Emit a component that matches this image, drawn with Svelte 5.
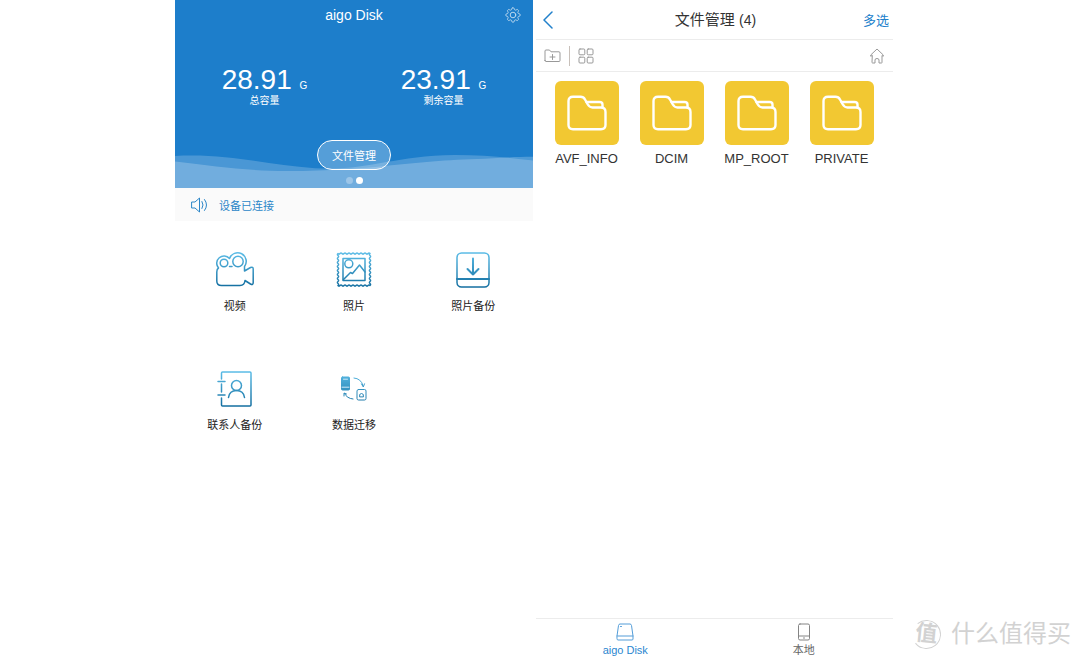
<script lang="ts">
	interface Stat {
		value: string;
		label: string;
	}

	const stats: Stat[] = [
		{ value: '28.91', label: '总容量' },
		{ value: '23.91', label: '剩余容量' }
	];

	const actions = [
		{ icon: 'video', label: '视频' },
		{ icon: 'photo', label: '照片' },
		{ icon: 'backup', label: '照片备份' },
		{ icon: 'contacts', label: '联系人备份' },
		{ icon: 'transfer', label: '数据迁移' }
	];

	const folders = ['AVF_INFO', 'DCIM', 'MP_ROOT', 'PRIVATE'];

	// stamp outline: a square with waved edges
	const stamp = (() => {
		const sides = [
			[1, 0],
			[0, 1],
			[-1, 0],
			[0, -1]
		];
		let d = 'M3 2.5';
		for (const [x, y] of sides) {
			for (let i = 0; i < 8; i++) {
				d += `q${x - y * 1.2} ${y + x * 1.2} ${x * 2} ${y * 2}`;
				d += `q${x + y * 1.2} ${y - x * 1.2} ${x * 2} ${y * 2}`;
			}
		}
		return d + 'z';
	})();

	// eight-lobed cog, radius swings between the notch and the tooth
	const cog = (() => {
		const points: string[] = [];
		for (let i = 0; i < 96; i++) {
			const a = (i / 96) * Math.PI * 2;
			const r = 6.3 + 0.9 * Math.tanh(2 * Math.cos(8 * a));
			points.push(`${(8 + r * Math.sin(a)).toFixed(2)} ${(8 - r * Math.cos(a)).toFixed(2)}`);
		}
		return 'M' + points.join('L') + 'z';
	})();
</script>

<div class="page">
	<section class="screen home">
		<header class="hero">
			<svg class="waves" viewBox="0 0 358 36" preserveAspectRatio="none" aria-hidden="true">
				<path d="M0 2C55 -1 92 12 140 15C195 18 215 2 280 1C310 1 335 4 358 7V36H0z" />
				<path d="M0 8C40 13 70 18 112 18C200 18 230 7 310 5C325 4 340 3 358 3V36H0z" />
			</svg>
			<div class="hero-bar">
				<h1>aigo Disk</h1>
				<button class="settings" aria-label="设置">
					<svg width="16" height="16" viewBox="0 0 16 16">
						<path d={cog} />
						<circle cx="8" cy="8" r="2.8" />
					</svg>
				</button>
			</div>
			<div class="stats">
				{#each stats as stat}
					<div class="stat">
						<p class="amount">{stat.value} <small>G</small></p>
						<p class="caption">{stat.label}</p>
					</div>
				{/each}
			</div>
			<button class="manage">文件管理</button>
			<div class="dots"><i></i><i class="on"></i></div>
		</header>

		<p class="notice">
			<svg width="18" height="16" viewBox="0 0 18 16" aria-hidden="true">
				<path d="M1 5h3l4.500-4v14L4 11H1zM11 4.500q2.200 3.500 0 7M13.500 2.500q4.200 5.500 0 11" />
			</svg>
			设备已连接
		</p>

		<svg class="defs" width="0" height="0" aria-hidden="true">
			<linearGradient id="blue" gradientUnits="userSpaceOnUse" x1="0" y1="0" x2="0" y2="38">
				<stop offset="0" stop-color="#5fc0ea" />
				<stop offset="1" stop-color="#0f6a9c" />
			</linearGradient>
		</svg>

		<nav class="actions">
			{#each actions as action}
				<button class="action">
					<svg width="38" height="38" viewBox="0 0 38 38" aria-hidden="true">
						{#if action.icon === 'video'}
							<path
								d="M2.500 17A7 7 0 1 1 13.500 7.500A8.600 8.600 0 1 1 28.500 15.500V20L34.500 16.500Q37.200 15.500 37.200 18V31.500Q37.200 34.500 34.500 33L29 29.500Q28.500 34.500 24 34.500H5.500Q.8 34.500 .8 30V21Q.8 18 2.500 17M13.500 15.500H16"
							/>
							<circle cx="8" cy="12" r="3.800" />
							<circle cx="22" cy="10.500" r="5.200" />
						{:else if action.icon === 'photo'}
							<path d={stamp} />
							<rect x="8" y="7.500" width="22" height="22" />
							<circle cx="13.800" cy="12.800" r="4" />
							<path d="M8.500 28.500L15.500 21.500L17.500 22.500L24.500 14L30 21" />
						{:else if action.icon === 'backup'}
							<rect x="3" y="2" width="32" height="34" rx="4.500" />
							<path d="M3 28H35" stroke-width="2.200" />
							<path d="M19 7.500V23.500M13.500 18L19 23.500L24.500 18" stroke-width="2" />
						{:else if action.icon === 'contacts'}
							<path d="M5.500 9V3Q5.500 2 6.500 2H34Q35 2 35 3V35Q35 36 34 36H6.500Q5.500 36 5.500 35V28M5.500 14V22" />
							<path d="M2 11.500H9M2 25H9" />
							<circle cx="20.500" cy="15.500" r="5" />
							<path d="M12.500 27.500Q13.500 20.500 20.500 20.500T28.500 27.500" />
						{:else}
							<rect x="6.500" y="7" width="8" height="13" rx="1" class="solid" />
							<path d="M7 17.200H14M8.500 9.200H12.500" class="light" />
							<rect x="22" y="19.500" width="9" height="10.500" rx="1.500" class="thin" />
							<path d="M24.500 26.500Q24 23.500 26.500 23.500T28.500 26.500z" class="thin" />
							<path
								d="M19 8Q26 8.500 28 15.500M26.500 14L28.300 17L29.500 13.800M18 29Q12 28.500 9.500 23.500M9 26V23L11.500 24"
								class="thin"
							/>
						{/if}
					</svg>
					<span>{action.label}</span>
				</button>
			{/each}
		</nav>
	</section>

	<section class="screen files">
		<header class="titlebar">
			<button class="back" aria-label="返回">
				<svg width="12" height="18" viewBox="0 0 12 18"><path d="M10 1L2 9l8 8" /></svg>
			</button>
			<h2>文件管理 <span>(4)</span></h2>
			<button class="select">多选</button>
		</header>

		<div class="toolbar">
			<button aria-label="新建文件夹">
				<svg width="17" height="14" viewBox="0 0 17 14">
					<path d="M1 11.500V2Q1 1 2 1H5.500L7 2.800H15Q16 2.800 16 4V11.500Q16 12.500 15 12.500H2Q1 12.500 1 11.500zM8.500 5.500V10.500M6 8H11" />
				</svg>
			</button>
			<span class="divider"></span>
			<button aria-label="网格视图">
				<svg width="16" height="16" viewBox="0 0 16 16">
					<rect x="1" y="1" width="5.800" height="5.800" rx="1" />
					<rect x="9.200" y="1" width="5.800" height="5.800" rx="1" />
					<rect x="1" y="9.200" width="5.800" height="5.800" rx="1" />
					<rect x="9.200" y="9.200" width="5.800" height="5.800" rx="1" />
				</svg>
			</button>
			<button class="to-home" aria-label="主页">
				<svg width="14" height="16" viewBox="0 0 14 16">
					<path d="M2 7.500L.8 8.300L.7 7L7 1L13.300 7L13.200 8.300L12 7.500V14.500Q12 15 11.500 15H9V12Q9 10.500 7 10.500T5 12V15H2.500Q2 15 2 14.500z" />
				</svg>
			</button>
		</div>

		<div class="folders">
			{#each folders as name}
				<button class="folder">
					<span class="tile">
						<svg width="40" height="36" viewBox="0 0 40 36" aria-hidden="true">
							<path
								d="M1.500 30V6Q1.500 1.800 6 1.800H13.500Q16.500 1.800 18 4.500L20.500 9Q22.500 12.500 25.500 12.500H34Q38.500 12.500 38.500 17V30Q38.500 34.200 34 34.200H6Q1.500 34.200 1.500 30z"
							/>
							<path d="M19.500 7H32.500Q35.500 7 35.500 9.500V12.500" />
						</svg>
					</span>
					{name}
				</button>
			{/each}
		</div>

		<nav class="tabs">
			<button class="tab active">
				<svg width="18" height="18" viewBox="0 0 18 18" aria-hidden="true">
					<path d="M1 13L2.500 2.500Q2.800 1 4 1H14Q15.200 1 15.500 2.500L17 13V16Q17 17 16 17H2Q1 17 1 16zM1 13H17M4.500 3.500H5.500" />
				</svg>
				aigo Disk
			</button>
			<button class="tab">
				<svg width="18" height="18" viewBox="0 0 18 18" aria-hidden="true">
					<rect x="3.500" y="1" width="11" height="16" rx="1.500" />
					<path d="M3.500 13H14.500M8.500 15H9.500" />
				</svg>
				<span>本地</span>
			</button>
		</nav>
	</section>

	<aside class="watermark">
		<span class="seal">值</span>
		<span>什么值得买</span>
	</aside>
</div>

<style>
	:global(body) {
		background: #fff;
		font-family: 'Liberation Sans', 'Noto Sans CJK SC', sans-serif;
	}

	.page {
		display: grid;
		grid-template-columns: minmax(0, 172fr) minmax(0, 358fr) minmax(0, 357fr) minmax(0, 184fr);
		column-gap: 3px;
		min-height: 100vh;
	}

	h1,
	h2,
	p {
		margin: 0;
		font-weight: 400;
	}

	button {
		padding: 0;
		border: 0;
		background: none;
		color: inherit;
		font: inherit;
		cursor: pointer;
	}

	svg {
		display: block;
		fill: none;
		stroke: currentColor;
		stroke-linecap: round;
		stroke-linejoin: round;
	}

	.screen {
		display: flex;
		flex-direction: column;
	}

	.home {
		grid-column: 2;
	}

	.hero {
		position: relative;
		display: flex;
		flex-direction: column;
		align-items: center;
		padding-bottom: 4px;
		background: #1d7ecb;
		color: #fff;
	}

	.waves {
		position: absolute;
		left: 0;
		bottom: 0;
		width: 100%;
		height: 34px;
		fill: rgba(255, 255, 255, 0.2);
		stroke: none;
	}

	.waves path:last-child {
		fill: rgba(255, 255, 255, 0.22);
	}

	.hero-bar {
		display: grid;
		grid-template-columns: 1fr auto 1fr;
		align-items: center;
		align-self: stretch;
		height: 30px;
		padding: 0 12px;
	}

	h1 {
		grid-column: 2;
		font-size: 14px;
		line-height: 18px;
	}

	.settings {
		justify-self: end;
		opacity: 0.7;
	}

	.stats {
		display: flex;
		align-self: stretch;
		margin-top: 37px;
	}

	.stat {
		flex: 1;
		text-align: center;
	}

	.amount {
		font-size: 28px;
		line-height: 26px;
	}

	.amount small {
		font-size: 10px;
		line-height: 10px;
	}

	.caption {
		font-size: 10px;
		line-height: 16px;
	}

	.manage {
		position: relative;
		width: 74px;
		height: 30px;
		margin-top: 31px;
		border: 1px solid #fff;
		border-radius: 15px;
		background: rgba(255, 255, 255, 0.25);
		font-size: 11px;
	}

	.dots {
		position: relative;
		display: flex;
		gap: 3px;
		margin-top: 7px;
	}

	.dots i {
		width: 7px;
		height: 7px;
		border-radius: 50%;
		background: rgba(255, 255, 255, 0.3);
	}

	.dots .on {
		background: #fff;
	}

	.notice {
		display: flex;
		align-items: center;
		gap: 10px;
		height: 33px;
		padding-left: 16px;
		background: #fafafa;
		color: #2b86c8;
		font-size: 11px;
	}

	.defs {
		position: absolute;
	}

	.actions {
		display: grid;
		grid-template-columns: repeat(3, 1fr);
		row-gap: 55px;
		padding-top: 30px;
	}

	.action {
		display: flex;
		flex-direction: column;
		align-items: center;
		gap: 8px;
		color: #222;
		font-size: 11px;
		line-height: 18px;
	}

	.action svg {
		stroke: url(#blue);
		stroke-width: 1.5;
	}

	.action .solid {
		fill: url(#blue);
		stroke-width: 1;
	}

	.action .thin {
		stroke-width: 1;
	}

	.action .light {
		stroke: #cfeaf8;
		stroke-width: 1;
	}

	.files {
		grid-column: 3;
	}

	.titlebar {
		display: grid;
		grid-template-columns: 1fr auto 1fr;
		align-items: center;
		height: 39px;
		padding: 0 4px 0 6px;
		border-bottom: 1px solid #ececec;
	}

	.back {
		justify-self: start;
		color: #2180cb;
	}

	.back svg {
		stroke-width: 1.5;
	}

	h2 {
		color: #333;
		font-size: 15px;
		line-height: 20px;
	}

	h2 span {
		font-size: 14px;
	}

	.select {
		justify-self: end;
		color: #2180cb;
		font-size: 13px;
	}

	.toolbar {
		display: flex;
		align-items: center;
		gap: 8px;
		height: 31px;
		padding: 0 9px 0 8px;
		border-bottom: 1px solid #ececec;
		color: #999;
	}

	.divider {
		width: 1px;
		height: 20px;
		background: #c8c0ba;
	}

	.to-home {
		margin-left: auto;
	}

	.folders {
		display: grid;
		grid-template-columns: repeat(4, 1fr);
		padding: 9px 9px 0 8px;
	}

	.folder {
		display: flex;
		flex-direction: column;
		align-items: center;
		gap: 6px;
		color: #333;
		font-size: 13px;
		line-height: 16px;
	}

	.tile {
		display: grid;
		place-items: center;
		width: 64px;
		height: 64px;
		border-radius: 6px;
		background: #f2c832;
		color: #fff;
	}

	.tile svg {
		stroke-width: 2.4;
	}

	.tabs {
		display: flex;
		margin-top: auto;
		border-top: 1px solid #ececec;
	}

	.tab {
		display: flex;
		flex: 1;
		flex-direction: column;
		align-items: center;
		gap: 2px;
		padding: 4px 0 2px;
		color: #666;
		font-size: 11px;
		line-height: 15px;
	}

	.tab svg {
		opacity: 0.8;
	}

	.tab.active {
		color: #2a86d0;
	}

	.watermark {
		grid-column: 4;
		display: flex;
		align-items: center;
		align-self: end;
		justify-content: flex-end;
		gap: 10px;
		padding: 0 9px 10px 0;
		color: #d2d2d2;
		font-size: 24px;
		line-height: 32px;
		white-space: nowrap;
	}

	.seal {
		width: 27px;
		height: 27px;
		border: 1px solid #d2d2d2;
		border-left-color: transparent;
		border-radius: 50%;
		font-size: 22px;
		font-weight: 700;
		line-height: 26px;
		text-align: center;
		transform: rotate(6deg);
	}
</style>
